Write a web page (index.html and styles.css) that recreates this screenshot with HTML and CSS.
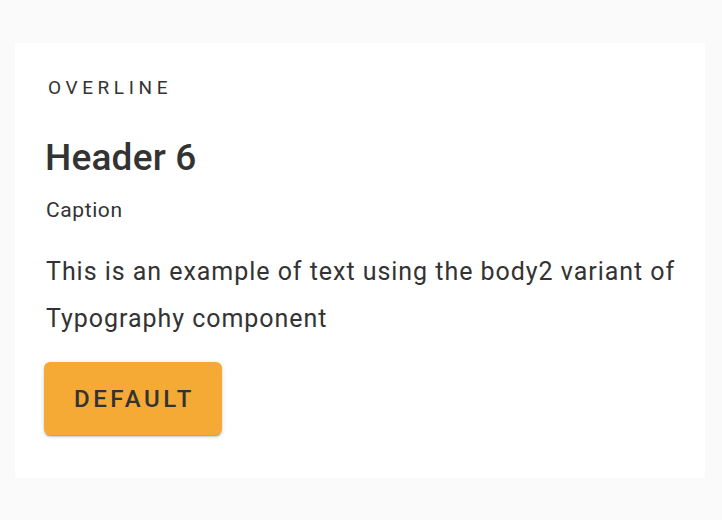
FILE: index.html
```html
<!DOCTYPE html>
<html>
<head>
<meta charset="utf-8">
<link rel="stylesheet" href="styles.css">
</head>
<body>
<div class="card">
  <div class="overline">Overline</div>
  <div class="header">Header 6</div>
  <div class="caption">Caption</div>
  <p class="body2">This is an example of text using the body2 variant of Typography component</p>
  <button class="btn">Default</button>
</div>
</body>
</html>
```
FILE: styles.css
```css
html, body {
  margin: 0;
  padding: 0;
  background: #fafafa;
  font-family: Roboto, "Helvetica Neue", Arial, sans-serif;
  color: #333333;
}
body {
  padding: 43px 17px 0 15px;
}
.card {
  background: #ffffff;
  width: 690px;
  box-sizing: border-box;
  height: 435px;
  padding: 30px 12px 43px 29px;
  display: flex;
  flex-direction: column;
  align-items: flex-start;
}
.overline {
  font-size: 19px;
  line-height: 30px;
  font-weight: 400;
  letter-spacing: 4.6px;
  text-transform: uppercase;
  padding-left: 4px;
}
.header {
  margin-top: 31px;
  font-size: 37px;
  line-height: 48px;
  font-weight: 500;
  letter-spacing: 0.2px;
  padding-left: 1px;
}
.caption {
  margin-top: 13px;
  font-size: 21px;
  line-height: 30px;
  letter-spacing: 0.6px;
  padding-left: 2px;
}
.body2 {
  margin: 23px 0 0;
  width: 640px;
  font-size: 25px;
  line-height: 47px;
  letter-spacing: 0.96px;
  padding-left: 2px;
}
.btn {
  margin-top: 20px;
  height: 73px;
  width: 178px;
  border: none;
  border-radius: 6px;
  background: #f4aa35;
  color: #333333;
  font-family: inherit;
  font-size: 24px;
  font-weight: 500;
  letter-spacing: 3.5px;
  text-transform: uppercase;
  box-shadow: 0 3px 1px -2px rgba(0,0,0,0.2), 0 2px 2px 0 rgba(0,0,0,0.14), 0 1px 5px 0 rgba(0,0,0,0.12);
  padding: 0 0 0 3px;
}
```
